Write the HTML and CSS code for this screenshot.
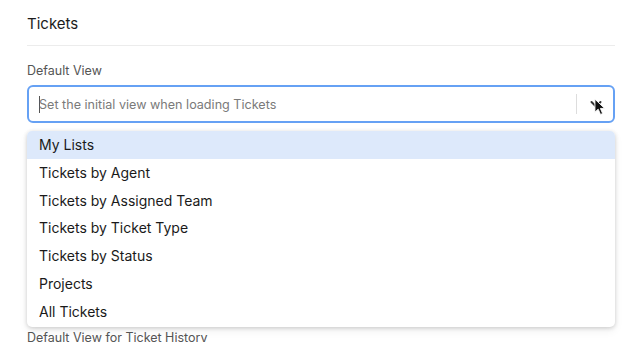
FILE: index.html
```html
<!DOCTYPE html>
<html lang="en">
<head>
    <meta charset="UTF-8">
    <meta name="viewport" content="width=device-width, initial-scale=1.0">
    <title>Ticket Settings</title>
    <link rel="stylesheet" href="styles.css">
</head>
<body>
    <div class="container">
        <h2 class="section-title">Tickets</h2>
        <div class="form-group">
            <label class="field-label">Default View</label>
            <div class="select-wrap">
                <div class="select-box">
                    <span class="caret"></span>
                    <span class="placeholder">Set the initial view when loading Tickets</span>
                    <span class="separator"></span>
                    <span class="chevron">
                        <svg width="14" height="14" viewBox="0 0 14 14"><path d="M2.5 5 L7 9.5 L11.5 5" fill="none" stroke="#333" stroke-width="2" stroke-linecap="round" stroke-linejoin="round"/></svg>
                    </span>
                    <svg class="pointer" width="13" height="19" viewBox="0 0 14 20"><path d="M1 1 L1 15 L4.5 11.8 L7 17.5 L9.3 16.5 L6.9 11 L11.5 11 Z" fill="#111" stroke="#fff" stroke-width="1"/></svg>
                </div>
                <ul class="menu">
                    <li class="menu-item active">My Lists</li>
                    <li class="menu-item">Tickets by Agent</li>
                    <li class="menu-item">Tickets by Assigned Team</li>
                    <li class="menu-item">Tickets by Ticket Type</li>
                    <li class="menu-item">Tickets by Status</li>
                    <li class="menu-item">Projects</li>
                    <li class="menu-item">All Tickets</li>
                </ul>
            </div>
        </div>
        <div class="form-group history">
            <label class="field-label">Default View for Ticket History</label>
        </div>
    </div>
</body>
</html>
```

FILE: styles.css
```css
body {
    margin: 0;
    font-family: Inter, "Open Sans", sans-serif;
    background-color: #fff;
    color: #1f1f1f;
}
.container {
    width: 588px;
    padding: 14px 0 0 27px;
}
.section-title {
    margin: 0;
    font-size: 15px;
    font-weight: 400;
    color: #1c1c1c;
    padding-bottom: 12px;
    border-bottom: 1px solid #ececec;
}
.form-group {
    display: flex;
    flex-direction: column;
    gap: 7px;
    margin-top: 17px;
}
.field-label {
    font-size: 12.5px;
    color: #555;
}
.select-wrap {
    position: relative;
}
.select-box {
    position: relative;
    display: flex;
    align-items: center;
    height: 34px;
    padding: 0 10px;
    border: 2px solid #66a1f4;
    border-radius: 6px;
}
.caret {
    width: 1px;
    height: 17px;
    background-color: #555;
    margin-right: -1px;
}
.placeholder {
    flex: 1;
    font-size: 12.6px;
    color: #7a7a7a;
}
.separator {
    width: 1px;
    height: 20px;
    background-color: #ddd;
    margin-right: 12px;
}
.chevron {
    display: flex;
    margin-right: 0;
}
.pointer {
    position: absolute;
    right: 6px;
    top: 11px;
}
.menu {
    position: absolute;
    top: 46px;
    left: 0;
    right: 0;
    margin: 0;
    padding: 0 0 1px;
    list-style: none;
    background-color: #fff;
    border-radius: 5px;
    box-shadow: 0 1px 4px rgba(0,0,0,0.18), 0 4px 10px rgba(0,0,0,0.06);
    z-index: 2;
}
.menu-item {
    height: 27.8px;
    line-height: 28.6px;
    padding: 0 12px;
    font-size: 14px;
    color: #1a1a1a;
}
.menu-item.active {
    background-color: #dde9fb;
    border-radius: 5px 5px 0 0;
}
.history {
    margin-top: 207px;
}
```
